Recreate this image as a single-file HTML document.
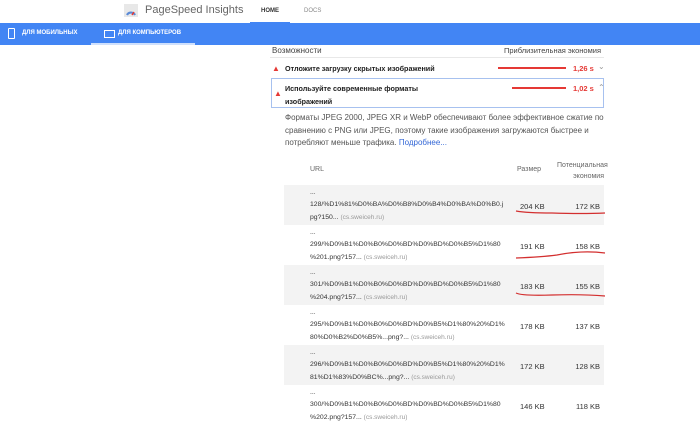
<!DOCTYPE html>
<html><head><meta charset="utf-8"><style>
*{margin:0;padding:0;box-sizing:border-box}
body{width:700px;height:431px;overflow:hidden;background:#fff;font-family:"Liberation Sans",sans-serif;color:#212121;position:relative}
.a{position:absolute;white-space:nowrap}
.s{font-size:7.5px}
.red{color:#e53935}
.bar{position:absolute;height:2px;background:#e53935}
.row{position:absolute;left:284px;width:320px;height:40px}
.row.g{background:#f3f3f3}
.url{position:absolute;left:26px;top:2px;font-size:6.85px;line-height:12.3px;color:#333}
.url span{color:#999;font-size:6.5px}
.n{position:absolute;top:17px;font-size:7.5px;color:#333}
</style></head><body>
<svg class="a" style="left:124px;top:4px" width="14" height="13"><rect width="14" height="13" fill="#e8e8e8"/><path d="M3 11 A4.5 4.5 0 0 1 11 11" stroke="#5b8ad6" stroke-width="2.2" fill="none"/><path d="M8 11 L10 8" stroke="#e53935" stroke-width="1.5"/></svg>
<div class="a" style="left:145px;top:4px;font-size:11px;color:#666">PageSpeed Insights</div>
<div class="a" style="left:261px;top:8px;font-size:6px;font-weight:bold;color:#333">HOME</div>
<div class="a" style="left:304px;top:8px;font-size:6px;color:#888">DOCS</div>
<div class="a" style="left:0;top:23px;width:700px;height:22px;background:#4285f4"></div>
<div class="a" style="left:250px;top:22px;width:40px;height:2px;background:#4285f4"></div>
<div class="a" style="left:8px;top:28px;width:7px;height:11px;border:1.5px solid #fff;border-radius:1px"></div>
<div class="a" style="left:22px;top:30px;font-size:6px;font-weight:bold;color:#fff">ДЛЯ МОБИЛЬНЫХ</div>
<div class="a" style="left:104px;top:30px;width:11px;height:8px;border:1.5px solid #fff"></div>
<div class="a" style="left:118px;top:30px;font-size:6px;font-weight:bold;color:#fff">ДЛЯ КОМПЬЮТЕРОВ</div>
<div class="a" style="left:91px;top:43px;width:104px;height:2px;background:#cfe0fc"></div>

<div class="a" style="left:272px;top:46px;color:#444;font-size:8px">Возможности</div>
<div class="a s" style="left:504px;top:46px;color:#444">Приблизительная экономия</div>
<div class="a" style="left:270px;top:57px;width:334px;height:1px;background:#e8e8e8"></div>
<div class="a red" style="left:272px;top:64px;font-size:8px">▲</div>
<div class="a" style="left:285px;top:64px;font-weight:bold;font-size:7.2px">Отложите загрузку скрытых изображений</div>
<div class="bar" style="left:498px;top:67px;width:68px"></div>
<div class="a red s" style="left:573px;top:64px;font-weight:bold">1,26 s</div>
<div class="a" style="left:598px;top:62px;font-size:8px;color:#999">⌄</div>
<div class="a" style="left:271px;top:78px;width:333px;height:30px;border:1px solid #a7c1ef"></div>
<div class="a red" style="left:274px;top:89px;font-size:8px">▲</div>
<div class="a" style="left:285px;top:82px;font-weight:bold;line-height:13px;font-size:7.2px">Используйте современные форматы<br>изображений</div>
<div class="bar" style="left:512px;top:87px;width:54px"></div>
<div class="a red s" style="left:573px;top:84px;font-weight:bold">1,02 s</div>
<div class="a" style="left:598px;top:83px;font-size:8px;color:#999">⌃</div>
<div class="a" style="left:285px;top:112px;font-size:8px;line-height:12.5px;color:#555">Форматы JPEG 2000, JPEG XR и WebP обеспечивают более эффективное сжатие по<br>сравнению с PNG или JPEG, поэтому такие изображения загружаются быстрее и<br>потребляют меньше трафика. <span style="color:#3367d6">Подробнее...</span></div>

<div class="a" style="left:310px;top:166px;font-size:7px;color:#666">URL</div>
<div class="a" style="left:517px;top:166px;font-size:7px;color:#666">Размер</div>
<div class="a" style="left:557px;top:160px;font-size:7px;color:#666;text-align:right;line-height:11px;width:47px">Потенциальная<br>экономия</div>

<div class="row g" style="top:185px"><div class="url">...<br>128/%D1%81%D0%BA%D0%B8%D0%B4%D0%BA%D0%B0.j<br>pg?150... <span>(cs.sweiceh.ru)</span></div><div class="n" style="left:236px">204 KB</div><div class="n" style="right:4px">172 KB</div></div>
<div class="row" style="top:225px"><div class="url">...<br>299/%D0%B1%D0%B0%D0%BD%D0%BD%D0%B5%D1%80<br>%201.png?157... <span>(cs.sweiceh.ru)</span></div><div class="n" style="left:236px">191 KB</div><div class="n" style="right:4px">158 KB</div></div>
<div class="row g" style="top:265px"><div class="url">...<br>301/%D0%B1%D0%B0%D0%BD%D0%BD%D0%B5%D1%80<br>%204.png?157... <span>(cs.sweiceh.ru)</span></div><div class="n" style="left:236px">183 KB</div><div class="n" style="right:4px">155 KB</div></div>
<div class="row" style="top:305px"><div class="url">...<br>295/%D0%B1%D0%B0%D0%BD%D0%B5%D1%80%20%D1%<br>80%D0%B2%D0%B5%...png?... <span>(cs.sweiceh.ru)</span></div><div class="n" style="left:236px">178 KB</div><div class="n" style="right:4px">137 KB</div></div>
<div class="row g" style="top:345px"><div class="url">...<br>296/%D0%B1%D0%B0%D0%BD%D0%B5%D1%80%20%D1%<br>81%D1%83%D0%BC%...png?... <span>(cs.sweiceh.ru)</span></div><div class="n" style="left:236px">172 KB</div><div class="n" style="right:4px">128 KB</div></div>
<div class="row" style="top:385px"><div class="url">...<br>300/%D0%B1%D0%B0%D0%BD%D0%BD%D0%B5%D1%80<br>%202.png?157... <span>(cs.sweiceh.ru)</span></div><div class="n" style="left:236px">146 KB</div><div class="n" style="right:4px">118 KB</div></div>

<svg class="a" style="left:512px;top:205px" width="95" height="95"><path d="M4 6 Q15 8 40 8 Q70 9 93 8" stroke="#d32f2f" stroke-width="1.2" fill="none"/><path d="M4 53 Q30 52 45 50 Q70 45 93 48" stroke="#d32f2f" stroke-width="1.2" fill="none"/><path d="M4 88 Q10 91 40 90 Q70 89 93 91" stroke="#d32f2f" stroke-width="1.2" fill="none"/></svg>
</body></html>
